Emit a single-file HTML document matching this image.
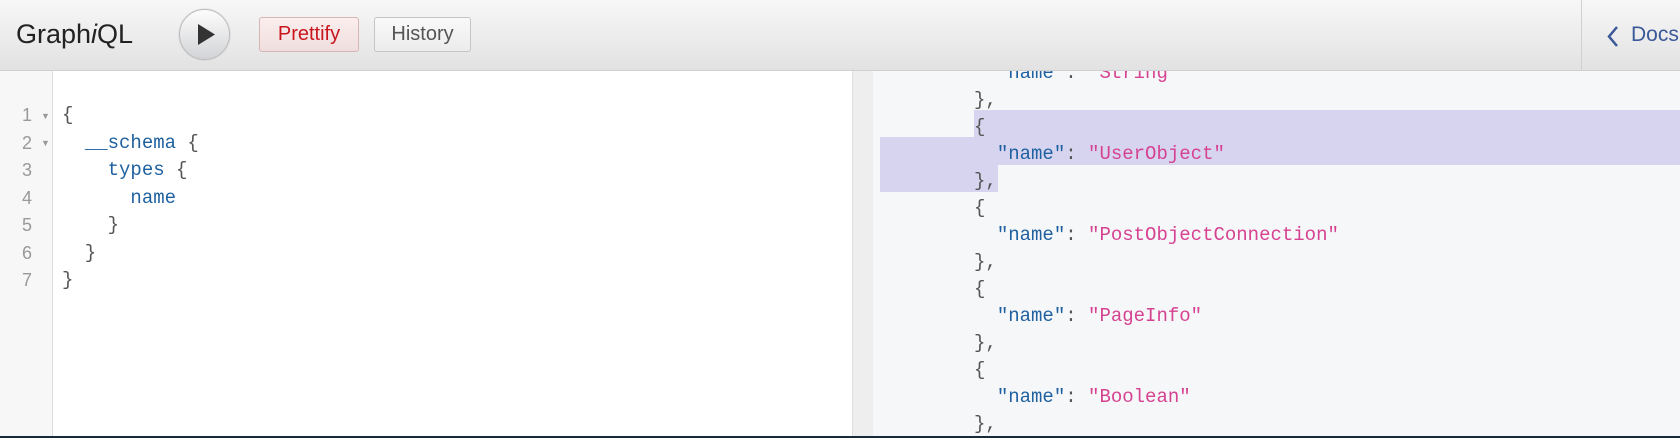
<!DOCTYPE html>
<html><head><meta charset="utf-8"><style>
*{margin:0;padding:0;box-sizing:border-box}
body{width:1680px;height:438px;overflow:hidden;background:#fff;font-family:"Liberation Sans",sans-serif;position:relative}
.tb{position:absolute;left:0;top:0;width:1680px;height:71px;background:linear-gradient(#f7f7f7,#e2e2e2);border-bottom:1px solid #d0d0d0}
.logo{position:absolute;left:16px;top:19px;font-size:27px;color:#222}
.exec{position:absolute;left:179px;top:9px;width:51px;height:51px;border-radius:50%;background:linear-gradient(#fdfdfd,#d2d3d6);border:1px solid #bbb;box-shadow:0 0 0 1px rgba(0,0,0,.05)}
.btn{position:absolute;top:17px;height:35px;border:1px solid #c5c5c5;border-radius:3px;background:linear-gradient(#f9f9f9,#ececec);font-size:20px;text-align:center;line-height:33px;color:#555}
.pr{left:259px;width:100px;color:#c8161d;background:linear-gradient(#fbeeee,#f0dede);border-color:#d8b5b5}
.hi{left:374px;width:97px}
.docs{position:absolute;left:1581px;top:0;width:99px;height:71px;border-left:1px solid #d0d0d0}
.code{position:absolute;font-family:"Liberation Mono",monospace;font-size:19px;white-space:pre;color:#555}
.k{color:#1f61a0}.s{color:#d64292}
.gut{position:absolute;left:0;top:71px;width:53px;height:367px;background:#f7f7f7;border-right:1px solid #ddd}
.ln{position:absolute;left:22px;top:102px;font-family:"Liberation Sans",sans-serif;font-size:18px;line-height:27.5px;color:#999;white-space:pre}
.ar{position:absolute;left:41px;font-size:9px;color:#999}
.sel{position:absolute;background:#d7d4f0}
</style></head><body>
<div class="tb">
<div class="logo">Graph<i>i</i>QL</div>
<div class="exec"><svg width="51" height="51" style="position:absolute;left:-1px;top:-1px"><path d="M19 15 L36 25.5 L19 36Z" fill="#333"/></svg></div>
<div class="btn pr">Prettify</div>
<div class="btn hi">History</div>
<div class="docs"><svg width="20" height="30" style="position:absolute;left:22px;top:22px"><path d="M13 5 L5 14.5 L13 24" stroke="#3b5998" stroke-width="2.5" fill="none"/></svg><span style="position:absolute;left:49px;top:23px;font-size:21px;color:#3b5998">Docs</span></div>
</div>
<div class="gut"></div>
<div class="ln">1
2
3
4
5
6
7</div>
<div class="ar" style="top:111px">▼</div>
<div class="ar" style="top:138px">▼</div>
<div class="code" style="left:62px;top:102px;line-height:27.5px">{
  <span class="k">__schema</span> {
    <span class="k">types</span> {
      <span class="k">name</span>
    }
  }
}</div>
<div style="position:absolute;left:852px;top:71px;width:21px;height:365px;background:#eeeeee;border-left:1px solid #e0e0e0"></div>
<div style="position:absolute;left:873px;top:71px;width:807px;height:365px;background:#f6f7f8"></div>
<div class="sel" style="left:974px;top:110px;width:706px;height:28px"></div>
<div class="sel" style="left:880px;top:137px;width:800px;height:28px"></div>
<div class="sel" style="left:880px;top:164px;width:118px;height:28px"></div>
<div style="position:absolute;left:873px;top:71px;width:807px;height:365px;overflow:hidden">
<div class="code" style="left:101px;top:-11px;line-height:27px">  <span class="k">"name"</span>: <span class="s">"String"</span>
},
{
  <span class="k">"name"</span>: <span class="s">"UserObject"</span>
},
{
  <span class="k">"name"</span>: <span class="s">"PostObjectConnection"</span>
},
{
  <span class="k">"name"</span>: <span class="s">"PageInfo"</span>
},
{
  <span class="k">"name"</span>: <span class="s">"Boolean"</span>
},</div></div>
<div style="position:absolute;left:0;top:436px;width:1680px;height:2px;background:#1b2a3a"></div>
</body></html>
